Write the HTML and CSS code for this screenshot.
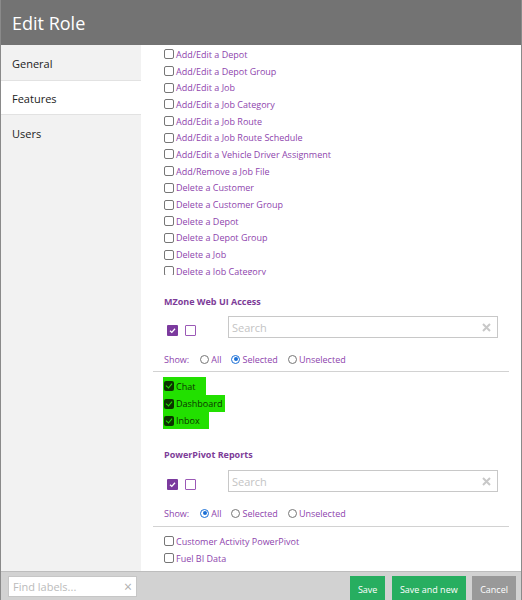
FILE: index.html
```html
<!DOCTYPE html>
<html>
<head>
<meta charset="utf-8">
<link rel="stylesheet" href="styles.css">
</head>
<body>
<div class="page">
  <header class="header"><h1 class="title">Edit Role</h1></header>
  <div class="middle">
    <nav class="sidebar">
      <div class="tab">General</div>
      <div class="tab active">Features</div>
      <div class="tab">Users</div>
    </nav>
    <main class="content">
      <div class="featlist">
        <div class="row"><span class="cb"></span><span class="lbl">Add/Edit a Depot</span></div>
        <div class="row"><span class="cb"></span><span class="lbl">Add/Edit a Depot Group</span></div>
        <div class="row"><span class="cb"></span><span class="lbl">Add/Edit a Job</span></div>
        <div class="row"><span class="cb"></span><span class="lbl">Add/Edit a Job Category</span></div>
        <div class="row"><span class="cb"></span><span class="lbl">Add/Edit a Job Route</span></div>
        <div class="row"><span class="cb"></span><span class="lbl">Add/Edit a Job Route Schedule</span></div>
        <div class="row"><span class="cb"></span><span class="lbl">Add/Edit a Vehicle Driver Assignment</span></div>
        <div class="row"><span class="cb"></span><span class="lbl">Add/Remove a Job File</span></div>
        <div class="row"><span class="cb"></span><span class="lbl">Delete a Customer</span></div>
        <div class="row"><span class="cb"></span><span class="lbl">Delete a Customer Group</span></div>
        <div class="row"><span class="cb"></span><span class="lbl">Delete a Depot</span></div>
        <div class="row"><span class="cb"></span><span class="lbl">Delete a Depot Group</span></div>
        <div class="row"><span class="cb"></span><span class="lbl">Delete a Job</span></div>
        <div class="row"><span class="cb"></span><span class="lbl">Delete a Job Category</span></div>
      </div>

      <section class="section">
        <div class="sec-title">MZone Web UI Access</div>
        <div class="controls">
          <span class="allbox"><svg width="11" height="11" viewBox="0 0 11 11"><rect x="0" y="0" width="11" height="11" rx="1" fill="#7b3a9e"/><path d="M3 5.8 L4.8 7.4 L8 3.8" fill="none" stroke="#fff" stroke-width="1.3"/></svg></span>
          <span class="nonebox"></span>
          <div class="search"><span class="ph">Search</span><svg class="x" width="9" height="9" viewBox="0 0 9 9"><path d="M1 1 L8 8 M8 1 L1 8" stroke="#c8c8c8" stroke-width="2"/></svg></div>
        </div>
        <div class="show">
          <span class="show-lbl">Show:</span>
          <span class="radio"></span><span class="opt">All</span>
          <span class="radio on"></span><span class="opt">Selected</span>
          <span class="radio"></span><span class="opt">Unselected</span>
        </div>
        <div class="divider"></div>
        <div class="items">
          <div class="hl w-chat"><span class="cbg"></span><span class="hl-lbl">Chat</span></div>
          <div class="hl w-dash"><span class="cbg"></span><span class="hl-lbl">Dashboard</span></div>
          <div class="hl w-inbox"><span class="cbg"></span><span class="hl-lbl">Inbox</span></div>
        </div>
      </section>

      <section class="section second">
        <div class="sec-title">PowerPivot Reports</div>
        <div class="controls">
          <span class="allbox"><svg width="11" height="11" viewBox="0 0 11 11"><rect x="0" y="0" width="11" height="11" rx="1" fill="#7b3a9e"/><path d="M3 5.8 L4.8 7.4 L8 3.8" fill="none" stroke="#fff" stroke-width="1.3"/></svg></span>
          <span class="nonebox"></span>
          <div class="search"><span class="ph">Search</span><svg class="x" width="9" height="9" viewBox="0 0 9 9"><path d="M1 1 L8 8 M8 1 L1 8" stroke="#c8c8c8" stroke-width="2"/></svg></div>
        </div>
        <div class="show">
          <span class="show-lbl">Show:</span>
          <span class="radio on"></span><span class="opt">All</span>
          <span class="radio"></span><span class="opt">Selected</span>
          <span class="radio"></span><span class="opt">Unselected</span>
        </div>
        <div class="divider"></div>
        <div class="items plain">
          <div class="row"><span class="cb"></span><span class="lbl">Customer Activity PowerPivot</span></div>
          <div class="row"><span class="cb"></span><span class="lbl">Fuel BI Data</span></div>
        </div>
      </section>
    </main>
  </div>
  <footer class="footer">
    <div class="find"><span class="find-ph">Find labels...</span><span class="find-x">×</span></div>
    <div class="buttons">
      <button class="btn green">Save</button>
      <button class="btn green">Save and new</button>
      <button class="btn grey">Cancel</button>
    </div>
  </footer>
</div>
</body>
</html>
```

FILE: styles.css
```css
* { box-sizing: border-box; }
html, body { margin: 0; padding: 0; }
body {
  font-family: "Open Sans", "Noto Sans", sans-serif;
  width: 522px;
  height: 600px;
  overflow: hidden;
  background: #fff;
}
.page {
  width: 522px;
  height: 600px;
  display: flex;
  flex-direction: column;
  border-left: 1px solid #8a8a8a;
  border-right: 1px solid #8a8a8a;
}
.header {
  height: 45px;
  flex: none;
  background: #737373;
  display: flex;
  align-items: center;
  padding-left: 11px;
}
.title {
  margin: 0;
  font-size: 18px;
  font-weight: 400;
  color: #fff;
  line-height: 1;
}
.middle {
  flex: 1;
  display: flex;
  min-height: 0;
}
.sidebar {
  width: 140px;
  flex: none;
  background: #f2f2f2;
}
.tab {
  height: 35px;
  display: flex;
  align-items: center;
  padding-left: 11px;
  font-size: 11px;
  color: #222;
  padding-top: 2px;
}
.tab.active {
  background: #fff;
  border-top: 1px solid #e2e2e2;
  border-bottom: 1px solid #e2e2e2;
  height: 35px;
}
.content {
  flex: 1;
  min-width: 0;
  overflow: hidden;
  background: #fff;
}
.featlist {
  height: 230px;
  overflow: hidden;
  padding-top: 1px;
  padding-left: 23px;
}
.row {
  height: 16.7px;
  display: flex;
  align-items: center;
}
.cb {
  width: 10px;
  height: 10px;
  border: 1px solid #767676;
  border-radius: 2px;
  background: #fff;
  flex: none;
  margin-right: 2px;
}
.lbl {
  font-size: 9px;
  color: #8e44ad;
  line-height: 1;
  white-space: nowrap;
}
.section {
  margin: 0 12px 0 12px;
}
.sec-title {
  margin-top: 18px;
  height: 18px;
  line-height: 18px;
  padding-left: 11px;
  font-size: 9px;
  font-weight: 700;
  color: #7d3c98;
}
.controls {
  margin-top: 5px;
  height: 22px;
  display: flex;
  align-items: center;
  padding-left: 14px;
}
.second .sec-title { margin-top: 17px; }
.second .controls { margin-top: 6px; }
.allbox {
  width: 11px;
  height: 11px;
  display: flex;
  margin-top: 6px;
}
.nonebox {
  width: 11px;
  height: 11px;
  border: 1.5px solid #9b59b6;
  border-radius: 1px;
  margin-left: 7px;
  margin-top: 6px;
}
.search {
  margin-left: 32px;
  width: 270px;
  height: 22px;
  border: 1px solid #c8c8c8;
  display: flex;
  align-items: center;
  justify-content: space-between;
  padding: 0 6px 0 3px;
}
.ph {
  font-size: 11px;
  color: #c4c4c4;
}
.show {
  margin-top: 12px;
  height: 18px;
  display: flex;
  align-items: center;
  padding-left: 11px;
  font-size: 9px;
  color: #8e44ad;
}
.second .show { margin-top: 12px; }
.show-lbl { margin-right: 11px; }
.radio {
  width: 9px;
  height: 9px;
  border: 1px solid #767676;
  border-radius: 50%;
  margin-right: 2px;
  flex: none;
  position: relative;
}
.radio.on {
  border: 1px solid #1a6fd6;
}
.radio.on::after {
  content: "";
  position: absolute;
  left: 1.5px;
  top: 1.5px;
  width: 4px;
  height: 4px;
  border-radius: 50%;
  background: #1a6fd6;
}
.opt { margin-right: 10px; }
.divider {
  margin-top: 3px;
  height: 1px;
  background: #d2d2d2;
}
.second .divider { margin-top: 4px; }
.items {
  margin-top: 5px;
  padding-left: 10px;
}
.items.plain { margin-top: 6px; padding-left: 11px; }
.hl {
  height: 17px;
  display: flex;
  align-items: center;
  background: #22e000;
  padding-left: 1px;
}
.w-chat { width: 43px; height: 18px; }
.w-dash { width: 62px; }
.w-inbox { width: 46px; }
.cbg {
  width: 10px;
  height: 10px;
  border-radius: 2px;
  background: #0c3300;
  flex: none;
  margin-right: 2px;
  position: relative;
}
.cbg::after {
  content: "";
  position: absolute;
  left: 3px;
  top: 1px;
  width: 3px;
  height: 5px;
  border-right: 1.5px solid #22e000;
  border-bottom: 1.5px solid #22e000;
  transform: rotate(40deg);
}
.hl-lbl {
  font-size: 9px;
  color: #0c3300;
  line-height: 1;
}
.footer {
  height: 29px;
  flex: none;
  background: #d2d2d2;
  border-top: 1px solid #bdbdbd;
  display: flex;
  align-items: flex-start;
  justify-content: space-between;
  padding: 4px 5px 0 7px;
}
.find {
  width: 129px;
  height: 21px;
  background: #fff;
  border: 1px solid #c6c6c6;
  display: flex;
  align-items: center;
  justify-content: space-between;
  padding: 0 4px 0 4px;
}
.find-ph {
  font-size: 11px;
  color: #bbb;
}
.find-x {
  font-size: 14px;
  color: #b0b0b0;
  line-height: 1;
}
.buttons {
  display: flex;
  gap: 6.5px;
}
.btn {
  font-family: "Open Sans", "Noto Sans", sans-serif;
  font-size: 9px;
  color: #fff;
  border: none;
  height: 26px;
  padding: 0 8px;
  margin: 0;
  cursor: pointer;
}
.btn.green { background: #27ae60; }
.btn.grey { background: #999; }
```
